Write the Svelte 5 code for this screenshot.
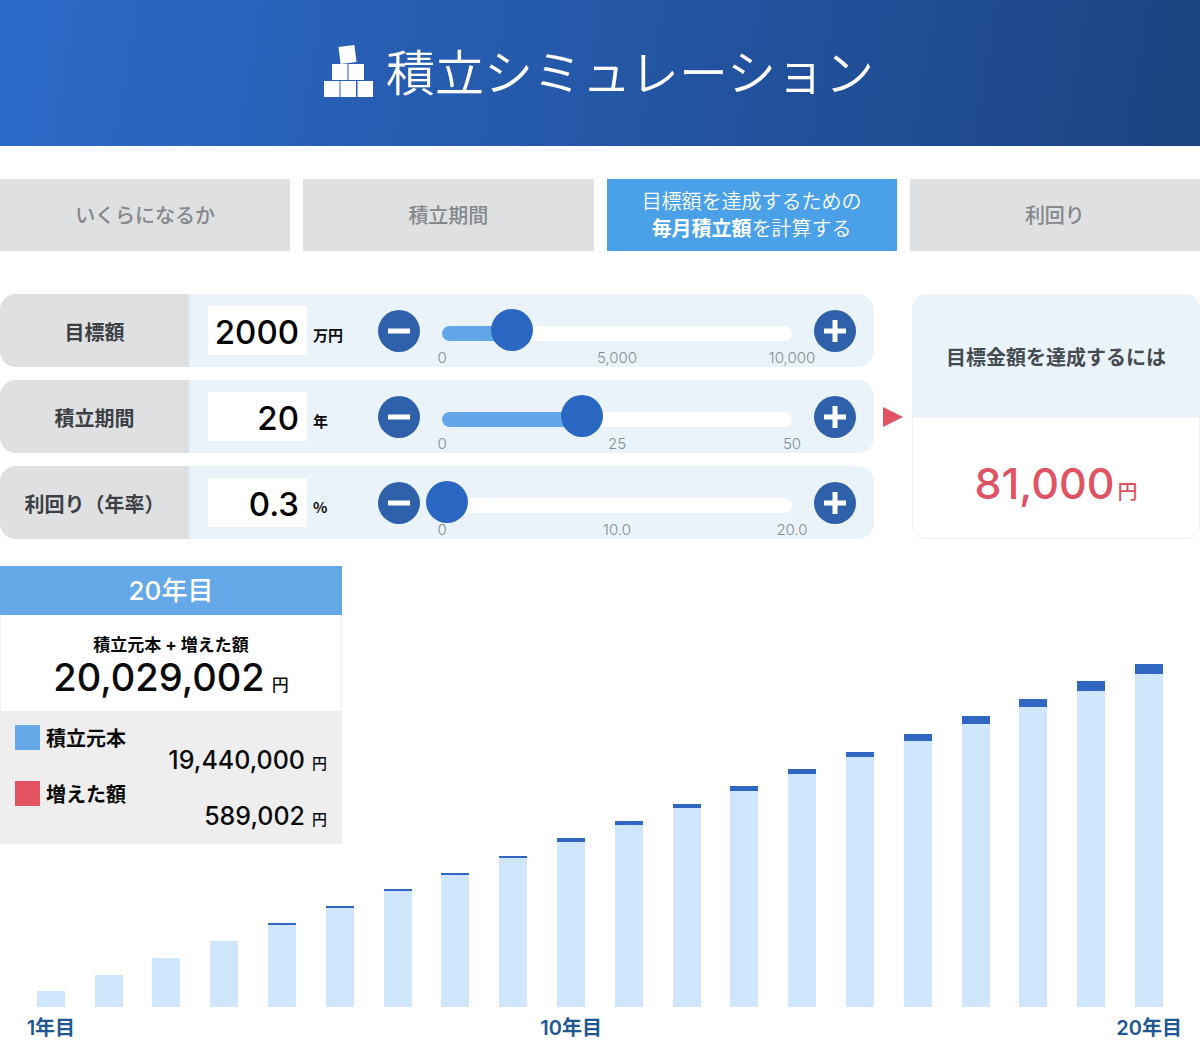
<script>
  let tabs = [
    { lead: '', strong: '', rest: 'いくらになるか' },
    { lead: '', strong: '', rest: '積立期間' },
    { lead: '目標額を達成するための', strong: '毎月積立額', rest: 'を計算する' },
    { lead: '', strong: '', rest: '利回り' }
  ];
  let active = $state(2);

  let settings = $state([
    { id: 'goal', label: '目標額', value: 2000, unit: '万円', max: 10000, step: 10, ticks: ['0', '5,000', '10,000'] },
    { id: 'years', label: '積立期間', value: 20, unit: '年', max: 50, step: 1, ticks: ['0', '25', '50'] },
    { id: 'rate', label: '利回り（年率）', value: 0.3, unit: '%', max: 20, step: 0.1, ticks: ['0', '10.0', '20.0'] }
  ]);

  function nudge(s, direction) {
    const next = s.value + direction * s.step;
    s.value = Math.min(s.max, Math.max(0, Math.round(next * 10) / 10));
  }

  // One entry per year: height of the principal and of the gain on top of it.
  const bars = [
    [16, 0], [32, 0], [49, 0], [66, 0], [82, 2], [99, 2], [116, 2], [132, 2], [149, 2], [165, 4],
    [182, 4], [199, 4], [216, 5], [233, 5], [250, 5], [266, 7], [283, 8], [300, 8], [316, 10], [333, 10]
  ];
  const labelled = [1, 10, 20];
</script>

<header class="hero">
  <svg class="blocks" viewBox="0 0 50 52" aria-hidden="true">
    <g fill="#fff">
      <rect x="15.500" y="1" width="16" height="17" transform="rotate(-7 23.500 9.500)" />
      <rect x="8" y="19" width="15.500" height="16" />
      <rect x="24.500" y="19" width="15.500" height="16" />
      <rect x="0" y="36" width="15.500" height="16" />
      <rect x="16.500" y="36" width="15.500" height="16" />
      <rect x="33.500" y="36" width="15.500" height="16" />
    </g>
  </svg>
  <h1>積立シミュレーション</h1>
</header>

<main>
  <nav class="tabs">
    {#each tabs as tab, i}
      <button class="tab" class:active={active === i} onclick={() => (active = i)}>
        {#if tab.lead}<span>{tab.lead}</span>{/if}
        <span>{#if tab.strong}<b>{tab.strong}</b>{/if}{tab.rest}</span>
      </button>
    {/each}
  </nav>

  <section class="simulator">
    <div class="settings">
      {#each settings as s}
        <div class="row">
          <label class="name" for={s.id}>{s.label}</label>
          <input class="value" id={s.id} type="text" inputmode="decimal" bind:value={s.value} />
          <span class="unit">{s.unit}</span>
          <button class="round" aria-label="{s.label}を減らす" onclick={() => nudge(s, -1)}>
            <svg viewBox="0 0 42 42" aria-hidden="true"><path d="M10 21h22" /></svg>
          </button>
          <div class="slider">
            <div class="rail">
              <div class="track"><div class="fill" style="width: {(s.value / s.max) * 100}%"></div></div>
              <input type="range" min="0" max={s.max} step={s.step} aria-label={s.label} bind:value={s.value} />
            </div>
            <div class="ticks">
              {#each s.ticks as t}<span>{t}</span>{/each}
            </div>
          </div>
          <button class="round" aria-label="{s.label}を増やす" onclick={() => nudge(s, 1)}>
            <svg viewBox="0 0 42 42" aria-hidden="true"><path d="M10 21h22M21 10v22" /></svg>
          </button>
        </div>
      {/each}
    </div>

    <svg class="arrow" viewBox="0 0 20 20" aria-hidden="true"><path d="M0 0l20 10L0 20z" fill="#df5362" /></svg>

    <div class="result">
      <h2>目標金額を達成するには</h2>
      <p><strong>81,000</strong><span>円</span></p>
    </div>
  </section>

  <section class="graph">
    <div class="chart">
      {#each bars as [principal, gain], i}
        <div class="column">
          <div class="gain" style="height: {gain}px"></div>
          <div class="principal" style="height: {principal}px"></div>
          <div class="year">{labelled.includes(i + 1) ? `${i + 1}年目` : ''}</div>
        </div>
      {/each}
    </div>

    <aside class="summary">
      <h2>20年目</h2>
      <div class="total">
        <p class="caption">積立元本 + 増えた額</p>
        <p class="amount"><strong>20,029,002</strong><span>円</span></p>
      </div>
      <dl>
        <dt><i class="swatch blue"></i>積立元本</dt>
        <dd><strong>19,440,000</strong><span>円</span></dd>
        <dt><i class="swatch red"></i>増えた額</dt>
        <dd><strong>589,002</strong><span>円</span></dd>
      </dl>
    </aside>
  </section>
</main>

<style>
  :global(body) {
    margin: 0;
    background: #fff;
    color: #0b0b0c;
    font-family: Inter, "Noto Sans CJK JP", sans-serif;
  }
  * {
    box-sizing: border-box;
  }
  h1, h2, p, dl, dd {
    margin: 0;
  }
  button, input {
    font-family: inherit;
    border: 0;
    padding: 0;
    margin: 0;
  }
  button {
    cursor: pointer;
  }

  .hero {
    display: flex;
    justify-content: center;
    align-items: flex-start;
    gap: 12px;
    height: 146px;
    padding: 45px 2px 0 0;
    background: linear-gradient(100deg, #2c6bc9 0%, #2558a8 48%, #1c4381 100%);
    color: #fff;
  }
  .blocks {
    width: 50px;
    height: 52px;
  }
  h1 {
    font-size: 49px;
    font-weight: 350;
    line-height: 58px;
  }

  .tabs {
    display: grid;
    grid-template-columns: repeat(4, 1fr);
    gap: 13px;
    margin-top: 33px;
  }
  .tab {
    display: flex;
    flex-direction: column;
    justify-content: center;
    align-items: center;
    height: 72px;
    padding-top: 2px;
    background: #dee0e2;
    color: #85878a;
    font-size: 20px;
    font-weight: 500;
    line-height: 27px;
  }
  .tab.active {
    background: #4aa1e8;
    color: #fff;
    font-weight: 350;
  }
  .tab b {
    font-weight: 700;
  }

  .simulator {
    display: flex;
    align-items: center;
    margin-top: 43px;
  }
  .settings {
    flex: 1;
    display: flex;
    flex-direction: column;
    gap: 13px;
  }
  .row {
    display: flex;
    align-items: center;
    height: 73px;
    padding-right: 18px;
    border-radius: 16px;
    overflow: hidden;
    background: #ebf3fa;
  }
  .name {
    display: flex;
    align-items: center;
    justify-content: center;
    align-self: stretch;
    width: 189px;
    padding-top: 1px;
    background: #dee0e2;
    color: #3c3f44;
    font-size: 20px;
    font-weight: 700;
  }
  .value {
    width: 99px;
    height: 49px;
    margin-left: 19px;
    padding: 2px 8px 0 0;
    background: #fff;
    color: #000;
    font-size: 33px;
    font-weight: 500;
    text-align: right;
  }
  .unit {
    width: 71px;
    padding: 8px 0 0 6px;
    font-family: "Noto Sans CJK JP", sans-serif;
    font-size: 15px;
    font-weight: 700;
    line-height: 20px;
  }
  .round {
    flex: none;
    width: 42px;
    height: 42px;
    border-radius: 50%;
    background: #2e61aa;
  }
  .round svg {
    display: block;
    stroke: #fff;
    stroke-width: 5;
  }
  .slider {
    flex: 1;
    align-self: flex-start;
    padding: 15px 1px 0;
  }
  .rail {
    display: grid;
  }
  .track, .rail input {
    grid-area: 1 / 1;
  }
  .track {
    height: 15px;
    margin: 17px 21px 0;
    border-radius: 8px;
    background: #fff;
    overflow: hidden;
  }
  .fill {
    height: 100%;
    background: #63a7e8;
  }
  .rail input {
    appearance: none;
    width: 100%;
    height: 42px;
    background: transparent;
  }
  .rail input::-webkit-slider-thumb {
    appearance: none;
    width: 42px;
    height: 42px;
    border-radius: 50%;
    background: #2a67c2;
  }
  .ticks {
    display: flex;
    justify-content: space-between;
    margin: 0 21px;
    color: #858c94;
    font-size: 15px;
    font-weight: 300;
    line-height: 14px;
  }
  .ticks span {
    display: flex;
    justify-content: center;
    width: 0;
  }

  .arrow {
    width: 20px;
    height: 20px;
    margin: 0 9px;
  }
  .result {
    align-self: stretch;
    width: 288px;
    border: 1px solid #eef0f2;
    border-radius: 14px;
    overflow: hidden;
    text-align: center;
  }
  .result h2 {
    display: flex;
    align-items: center;
    justify-content: center;
    height: 123px;
    background: #ebf3fa;
    color: #464b52;
    font-size: 20px;
    font-weight: 700;
  }
  .result p {
    display: flex;
    align-items: baseline;
    justify-content: center;
    gap: 3px;
    padding-top: 40px;
    color: #df5362;
    font-size: 20px;
    font-weight: 500;
    line-height: 50px;
  }
  .result strong {
    font-size: 43px;
    font-weight: 500;
  }

  .graph {
    display: grid;
    margin-top: 27px;
  }
  .chart, .summary {
    grid-area: 1 / 1;
  }
  .chart {
    display: grid;
    grid-template-columns: repeat(20, 1fr);
    align-items: end;
    padding: 98px 22px 12px;
  }
  .column {
    display: flex;
    flex-direction: column;
    align-items: center;
    min-width: 0;
  }
  .gain, .principal {
    width: 28px;
  }
  .gain {
    background: #3067c0;
  }
  .principal {
    background: #d0e6fc;
  }
  .year {
    height: 28px;
    margin-top: 7px;
    color: #215791;
    font-size: 20px;
    font-weight: 600;
    line-height: 28px;
    white-space: nowrap;
  }

  .summary {
    align-self: start;
    width: 342px;
    background: #fff;
    font-weight: 500;
  }
  .summary strong {
    font-weight: 500;
  }
  .summary h2 {
    background: #65a8e7;
    color: #fff;
    font-size: 26px;
    font-weight: 500;
    line-height: 49px;
    text-align: center;
  }
  .total {
    height: 96px;
    padding-top: 17px;
    border: solid #eee;
    border-width: 0 1px;
    text-align: center;
  }
  .caption {
    font-size: 17px;
    font-weight: 700;
    line-height: 26px;
  }
  .amount {
    display: flex;
    justify-content: center;
    align-items: baseline;
    gap: 7px;
    font-size: 17px;
    line-height: 38px;
  }
  .amount strong {
    font-size: 38px;
  }
  dl {
    height: 133px;
    padding: 14px 15px 0;
    background: #eee;
  }
  dt {
    display: flex;
    align-items: center;
    gap: 6px;
    height: 24px;
    font-size: 20px;
    font-weight: 700;
  }
  .swatch {
    width: 25px;
    height: 25px;
  }
  .blue {
    background: #65a8e7;
  }
  .red {
    background: #e25260;
  }
  dd {
    display: flex;
    justify-content: flex-end;
    align-items: baseline;
    gap: 7px;
    height: 32px;
    font-size: 15px;
    line-height: 22px;
  }
  dd strong {
    font-size: 25px;
  }
</style>
